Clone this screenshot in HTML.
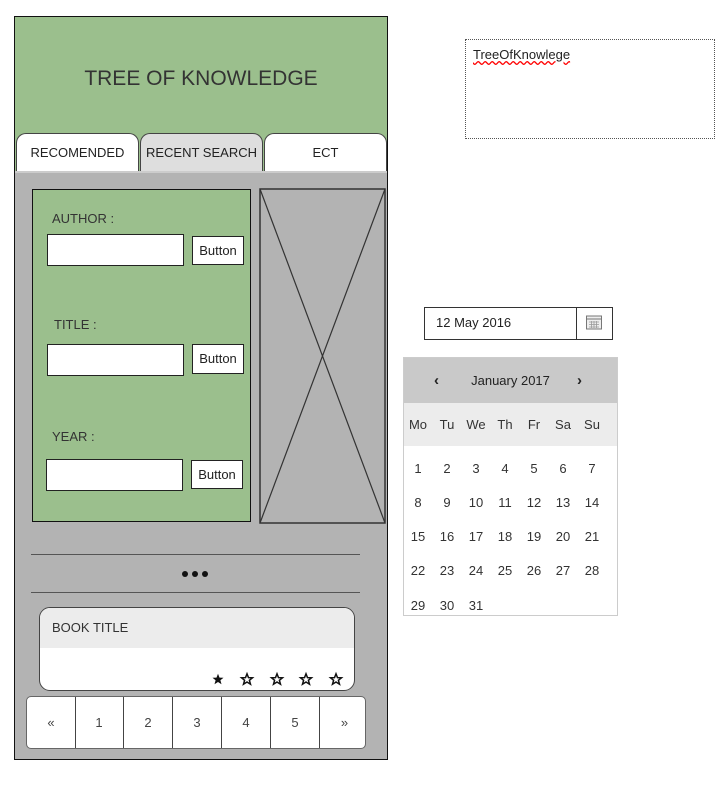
<!DOCTYPE html>
<html><head><style>
*{box-sizing:border-box;margin:0;padding:0}
body{width:728px;height:796px;background:#fff;font-family:"Liberation Sans",sans-serif;position:relative;overflow:hidden;color:#222}
.a{position:absolute}
.inp{position:absolute;background:#fff;border:1px solid #222}
.btn{position:absolute;background:#fff;border:1px solid #222;font-size:13px;text-align:center;line-height:27px}
.lbl{position:absolute;font-size:13px;color:#333}
.tab{position:absolute;top:133px;height:39px;border:1px solid #444;border-bottom:none;border-radius:10px 10px 0 0;font-size:13px;text-align:center;line-height:38px}
.c{position:absolute;font-size:13px;width:24px;text-align:center;color:#333}
.pg{position:absolute;top:0;height:52px;width:49px;border-right:1px solid #444;text-align:center;line-height:52px;font-size:13px;color:#444}
</style></head><body>
<div class="a" style="left:14px;top:16px;width:374px;height:744px;border:1px solid #111;background:#b3b3b3"></div>
<div class="a" style="left:15px;top:17px;width:372px;height:155px;background:#9bbf8d"></div>
<div class="a" style="left:15px;top:67px;width:372px;text-align:center;font-size:21px;color:#333">TREE OF KNOWLEDGE</div>
<div class="tab" style="left:16px;width:123px;background:#fff">RECOMENDED</div>
<div class="tab" style="left:140px;width:123px;background:#dedede">RECENT SEARCH</div>
<div class="tab" style="left:264px;width:123px;background:#fff">ECT</div>
<div class="a" style="left:15px;top:171px;width:372px;height:2px;background:#ccc"></div>

<div class="a" style="left:32px;top:189px;width:219px;height:333px;background:#9bbf8d;border:1px solid #111"></div>
<div class="lbl" style="left:52px;top:211px">AUTHOR :</div>
<div class="inp" style="left:47px;top:234px;width:137px;height:32px"></div>
<div class="btn" style="left:192px;top:236px;width:52px;height:29px">Button</div>
<div class="lbl" style="left:54px;top:317px">TITLE :</div>
<div class="inp" style="left:47px;top:344px;width:137px;height:32px"></div>
<div class="btn" style="left:192px;top:344px;width:52px;height:30px">Button</div>
<div class="lbl" style="left:52px;top:429px">YEAR :</div>
<div class="inp" style="left:46px;top:459px;width:137px;height:32px"></div>
<div class="btn" style="left:191px;top:460px;width:52px;height:29px">Button</div>

<svg class="a" style="left:259px;top:188px" width="127" height="336"><rect x="1" y="1" width="125" height="334" fill="#b3b3b3" stroke="#333" stroke-width="1.5"/><line x1="1" y1="1" x2="126" y2="335" stroke="#333" stroke-width="1.2"/><line x1="126" y1="1" x2="1" y2="335" stroke="#333" stroke-width="1.2"/></svg>

<div class="a" style="left:31px;top:554px;width:329px;height:1px;background:#555"></div>
<div class="a" style="left:31px;top:592px;width:329px;height:1px;background:#555"></div>
<svg class="a" style="left:180px;top:569px" width="30" height="10"><circle cx="5" cy="5" r="3" fill="#111"/><circle cx="15" cy="5" r="3" fill="#111"/><circle cx="25" cy="5" r="3" fill="#111"/></svg>

<div class="a" style="left:39px;top:607px;width:316px;height:84px;border:1.5px solid #444;border-radius:11px;background:#fff;overflow:hidden">
<div style="height:40px;background:#ececec;font-size:13px;padding:12px 0 0 12px;color:#333">BOOK TITLE</div>
</div>
<svg class="a" style="left:210px;top:671px" width="140" height="16">
<defs><path id="s" d="M6 0.8L7.5 4.6L11.5 4.8L8.4 7.3L9.5 11.2L6 9L2.5 11.2L3.6 7.3L0.5 4.8L4.5 4.6Z"/></defs>
<use href="#s" x="2" y="2" fill="#111"/>
<use href="#s" x="31" y="2" fill="none" stroke="#111" stroke-width="1.5"/>
<use href="#s" x="61" y="2" fill="none" stroke="#111" stroke-width="1.5"/>
<use href="#s" x="90" y="2" fill="none" stroke="#111" stroke-width="1.5"/>
<use href="#s" x="120" y="2" fill="none" stroke="#111" stroke-width="1.5"/>
</svg>

<div class="a" style="left:26px;top:696px;width:340px;height:53px;border:1px solid #666;border-radius:5px;background:#fff;overflow:hidden">
<div class="pg" style="left:0">«</div><div class="pg" style="left:48px">1</div><div class="pg" style="left:97px">2</div><div class="pg" style="left:146px">3</div><div class="pg" style="left:195px">4</div><div class="pg" style="left:244px">5</div><div class="pg" style="left:293px;border:none">»</div>
</div>

<div class="a" style="left:465px;top:39px;width:250px;height:100px;border:1px dotted #555"></div>
<div class="a" style="left:473px;top:47px;font-size:13px;color:#222;text-decoration:underline wavy red">TreeOfKnowlege</div>

<div class="a" style="left:424px;top:307px;width:189px;height:33px;border:1.5px solid #333;background:#fff"></div>
<div class="a" style="left:576px;top:307px;width:1px;height:33px;background:#333"></div>
<div class="a" style="left:436px;top:315px;font-size:13px">12 May 2016</div>
<svg class="a" style="left:585px;top:313px" width="18" height="18"><rect x="1.5" y="3" width="15" height="13" fill="#eee" stroke="#777"/><line x1="1.5" y1="6" x2="16.5" y2="6" stroke="#777"/><path d="M4 9h10M4 11.5h10M4 14h10M6.5 8v7M9 8v7M11.5 8v7" stroke="#999" stroke-width=".8"/></svg>

<div class="a" style="left:403px;top:357px;width:215px;height:259px;border:1px solid #ccc;background:#fff"></div>
<div class="a" style="left:404px;top:358px;width:213px;height:45px;background:#c9c9c9"></div>
<div class="a" style="left:404px;top:403px;width:213px;height:43px;background:#ececec"></div>
<div class="a" style="left:434px;top:372px;font-size:15px;font-weight:bold">‹</div>
<div class="a" style="left:577px;top:372px;font-size:15px;font-weight:bold">›</div>
<div class="a" style="left:404px;top:373px;width:213px;text-align:center;font-size:13px">January 2017</div>
<div id="cal"></div>
<script>
var xs=[418,447,476,505,534,563,592],h='',d=['Mo','Tu','We','Th','Fr','Sa','Su'];
for(var i=0;i<7;i++)h+='<div class="c" style="left:'+(xs[i]-12)+'px;top:417px">'+d[i]+'</div>';
var ys=[461,495,529,563,598];
for(var n=1;n<=31;n++){var r=Math.floor((n-1)/7),c=(n-1)%7;h+='<div class="c" style="left:'+(xs[c]-12)+'px;top:'+ys[r]+'px">'+n+'</div>';}
document.getElementById('cal').outerHTML=h;
</script>
</body></html>
